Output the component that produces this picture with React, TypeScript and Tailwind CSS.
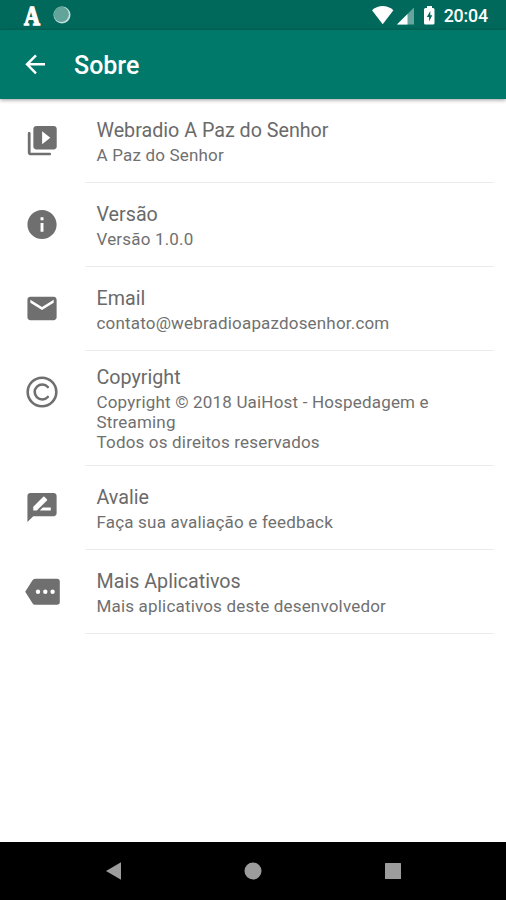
import type { ReactNode } from "react";

function Icon({ children }: { children: ReactNode }) {
  return (
    <svg viewBox="0 0 36 36" className="h-9 w-9 shrink-0" fill="#6f6f6f">
      {children}
    </svg>
  );
}

const videoIcon = (
  <Icon>
    <g transform="translate(.6 .2) scale(1.46)">
      <path d="M4.100 6.900C4.100 5.700 2.200 5.700 2.200 6.900V20c0 1.100.8 2 1.900 2h13.200c1.100 0 1.100-1.800 0-1.800H4.100V6.900zM20 2H8c-1.100 0-2 .9-2 2v12c0 1.100.9 2 2 2h12c1.100 0 2-.9 2-2V4c0-1.100-.9-2-2-2zm-8 12.500v-9l5.600 4.500-5.600 4.500z" />
    </g>
  </Icon>
);
const infoIcon = (
  <Icon>
    <g transform="translate(.5 0) scale(1.46)">
      <path d="M12 2C6.480 2 2 6.480 2 12s4.480 10 10 10 10-4.480 10-10S17.520 2 12 2zm1 15h-2v-6h2v6zm0-8h-2V7h2v2z" />
    </g>
  </Icon>
);
const mailIcon = (
  <Icon>
    <g transform="translate(.5 0) scale(1.46)">
      <path d="M20 4H4c-1.100 0-1.990.9-1.990 2L2 18c0 1.100.9 2 2 2h16c1.100 0 2-.9 2-2V6c0-1.100-.9-2-2-2zm0 4l-8 5-8-5V6l8 5 8-5v2z" />
    </g>
  </Icon>
);
const copyrightIcon = (
  <Icon>
    <g fill="none" stroke="#6f6f6f" strokeWidth="2.600">
      <circle cx="18" cy="18" r="14.300" />
      <path d="M23.800 13A7.500 7.500 0 1 0 23.800 23" strokeLinecap="round" />
    </g>
  </Icon>
);
const reviewIcon = (
  <Icon>
    <g transform="translate(.5 0) scale(1.46)">
      <path d="M20 2H4c-1.100 0-1.990.9-1.990 2L2 22l4-4h14c1.100 0 2-.9 2-2V4c0-1.100-.9-2-2-2zM6 14v-2.470l6.880-6.880c.2-.2.510-.2.710 0l1.770 1.770c.2.2.2.510 0 .71L8.470 14H6zm12 0h-7.500l2-2H18v2z" />
    </g>
  </Icon>
);
const moreIcon = (
  <Icon>
    <path
      fillRule="evenodd"
      d="M11 4.800H33a2.800 2.800 0 0 1 2.800 2.800V28a2.800 2.800 0 0 1-2.800 2.800H11Q9.500 30.800 8.500 29.300L1.200 17.800 8.500 6.300Q9.500 4.800 11 4.800ZM14 15.600a2.200 2.200 0 1 0 0 4.400 2.200 2.200 0 0 0 0-4.400ZM21.300 15.600a2.200 2.200 0 1 0 0 4.400 2.200 2.200 0 0 0 0-4.400ZM28.600 15.600a2.200 2.200 0 1 0 0 4.400 2.200 2.200 0 0 0 0-4.400Z"
    />
  </Icon>
);

function Row({ icon, title, lines, height }: { icon: ReactNode; title: string; lines: string[]; height: string }) {
  const multiline = lines.length > 1;
  return (
    <li className={`flex pl-6 pr-3 ${height}`}>
      <div className={`w-[61px] shrink-0 ${multiline ? "pt-[23px]" : "flex items-center"}`}>{icon}</div>
      <div className={`flex flex-1 flex-col justify-center border-b border-[#ececec] pl-[11.500px] ${multiline ? "pt-px" : "pt-[2px]"}`}>
        <h2 className="text-[19.700px] leading-[26px] text-[#6a6a6a]">{title}</h2>
        {lines.map((line) => (
          <p key={line} className="whitespace-nowrap text-[17px] leading-[20px] tracking-[0.180px] text-[#707070] first-of-type:pt-px">
            {line}
          </p>
        ))}
      </div>
    </li>
  );
}

export default function App() {
  return (
    <div className="flex h-[900px] w-[506px] flex-col overflow-hidden bg-white font-['Roboto','Noto_Sans',sans-serif]">
      <div className="flex h-[30px] shrink-0 items-center bg-[#00695c] pl-6 pr-[18px] text-white">
        <span className="w-[29px] shrink-0 pt-[2px]">
          <span className="block origin-left scale-x-[0.820] font-['Liberation_Serif',serif] text-[27px] leading-[30px] font-bold [-webkit-text-stroke:1.400px_white]">A</span>
        </span>
        <svg viewBox="0 0 18 18" className="h-[18px] w-[18px]">
          <circle cx="9" cy="9" r="8.500" fill="#c4e0dc" />
          <circle cx="8.300" cy="8.300" r="7.600" fill="#62a39a" />
        </svg>
        <svg viewBox="0 0 70 22" className="ml-auto h-[22px] w-[70px]" fill="#fff">
          <path d="M1 6.200Q11.700 -2.200 22.400 6.200L11.700 20.200Z" />
          <path d="M26 20.500L43 3.500V20.500Z" opacity=".4" />
          <path d="M26 20.500L36.500 10V20.500Z" />
          <path fillRule="evenodd" d="M56 2h5v2h1q1.500 0 1.500 1.500v13.500q0 1.500-1.500 1.500h-7.500q-1.500 0-1.500-1.500V5.500Q53 4 54.500 4H56ZM59.300 7l-3.500 6h2.300v4.500l3.200-6.200h-2Z" />
        </svg>
        <span className="ml-[3px] text-[17.800px] leading-[30px] font-medium tracking-[-0.150px] pt-[2px]">20:04</span>
      </div>
      <header className="z-10 flex h-[68.500px] shrink-0 items-center bg-[#00796b] pl-6 text-white shadow-[0_1px_4px_rgba(0,0,0,0.4)]">
        <svg viewBox="0 0 22 22" className="h-[22px] w-[22px]" fill="none" stroke="#fff" strokeWidth="2.400">
          <path d="M21 11.300H3M12 2.300L3 11.300L12 20.300" />
        </svg>
        <h1 className="pl-7 pt-[4px] text-[25px] leading-[30px] font-medium">Sobre</h1>
      </header>
      <ul className="flex-1">
        <Row height="h-[84.500px]" icon={videoIcon} title="Webradio A Paz do Senhor" lines={["A Paz do Senhor"]} />
        <Row height="h-[84px]" icon={infoIcon} title="Versão" lines={["Versão 1.0.0"]} />
        <Row height="h-[84px]" icon={mailIcon} title="Email" lines={["contato@webradioapazdosenhor.com"]} />
        <Row
          height="h-[115px]"
          icon={copyrightIcon}
          title="Copyright"
          lines={["Copyright © 2018 UaiHost - Hospedagem e", "Streaming", "Todos os direitos reservados"]}
        />
        <Row height="h-[84px]" icon={reviewIcon} title="Avalie" lines={["Faça sua avaliação e feedback"]} />
        <Row height="h-[84px]" icon={moreIcon} title="Mais Aplicativos" lines={["Mais aplicativos deste desenvolvedor"]} />
      </ul>
      <nav className="flex h-[58px] shrink-0 items-center justify-between bg-black px-[104px]">
        <svg viewBox="0 0 18 18" className="h-[18px] w-[18px]" fill="#9c9c9c">
          <path d="M2 9L17 0.300V17.700Z" />
        </svg>
        <svg viewBox="0 0 18 18" className="h-[18px] w-[18px]" fill="#9c9c9c">
          <circle cx="9" cy="9" r="8.500" />
        </svg>
        <svg viewBox="0 0 18 18" className="h-[18px] w-[18px]" fill="#9c9c9c">
          <rect x="1" y="1" width="16" height="16" rx=".5" />
        </svg>
      </nav>
    </div>
  );
}
